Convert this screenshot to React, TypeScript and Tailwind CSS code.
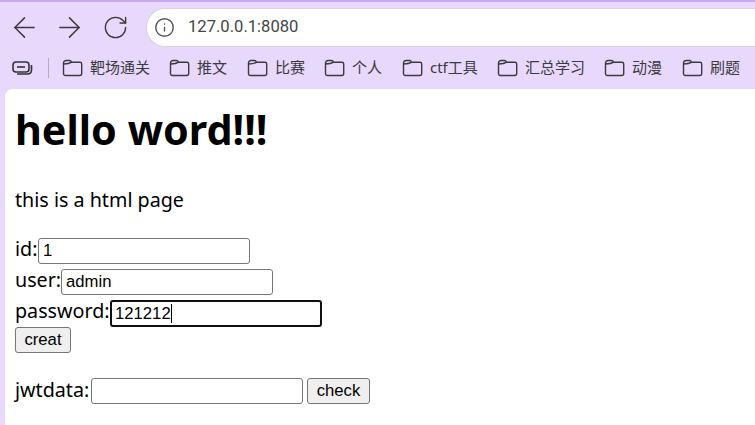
import { ArrowLeft, ArrowRight, Info, RotateCw } from "lucide-react"

const bookmarks = [
  { label: "靶场通关", width: "w-[107px]" },
  { label: "推文", width: "w-[78px]" },
  { label: "比赛", width: "w-[77px]" },
  { label: "个人", width: "w-[78px]" },
  { label: "ctf工具", width: "w-[95px]" },
  { label: "汇总学习", width: "w-[107px]" },
  { label: "动漫", width: "w-[78px]" },
  { label: "刷题", width: "w-[72px]" },
]

function FolderIcon() {
  return (
    <svg width="21" height="18" viewBox="0 0 21 18" fill="none" stroke="#3b3a40" strokeWidth="1.4" className="shrink-0">
      <path d="M1.5 4.2C1.5 2.6 2.6 1.5 4.2 1.5H7.6C8.6 1.5 9 2 9.6 3.2H18C19 3.2 19.7 3.9 19.7 4.9V14.5C19.7 15.7 18.9 16.5 17.7 16.5H3.5C2.3 16.5 1.5 15.7 1.5 14.5V4.2Z" />
      <path d="M1.5 5C3.5 5 7 5 9.6 3.2" />
    </svg>
  )
}

function TextField({ value = "" }: { value?: string }) {
  return (
    <input
      readOnly
      value={value}
      className="h-[26px] w-[212px] rounded-[3px] border border-[#767676] bg-white px-[4px] font-['Liberation_Sans',sans-serif] text-[16.7px] text-black outline-none"
    />
  )
}

export default function App() {
  return (
    <div className="h-[425px] w-[755px] overflow-hidden bg-[#e8d8fb] font-['Noto_Sans','Noto_Sans_CJK_SC',sans-serif]">
      {/* Barre du navigateur */}
      <div className="h-[2px] bg-[#c8a8f4]" />
      <div className="flex h-[44px] items-end pl-[8px]">
        <div className="flex h-[38px] w-full items-center">
          <ArrowLeft size={33} strokeWidth={1.05} className="shrink-0 text-[#3a3a3e]" />
          <ArrowRight size={33} strokeWidth={1.05} className="ml-[12px] shrink-0 text-[#3a3a3e]" />
          <RotateCw size={27} strokeWidth={1.2} className="ml-[16px] shrink-0 text-[#3a3a3e]" />
          <div className="ml-[17px] flex h-[39px] flex-1 items-center rounded-l-[19px] border-y border-l border-[#d8d2dc] bg-white pl-[7px]">
            <Info size={21} strokeWidth={1.6} className="text-[#55555a]" />
            <span className="ml-[13px] font-['Roboto',sans-serif] text-[16.6px] text-[#44444a]">127.0.0.1:8080</span>
          </div>
        </div>
      </div>

      {/* Favoris */}
      <div className="flex h-[43px] items-center pl-[12px]">
        <svg width="21" height="16" viewBox="0 0 21 16" fill="none" stroke="#333338" strokeWidth="1.6" className="shrink-0">
          <rect x="1" y="2" width="16" height="10" rx="3" />
          <path d="M5 7H13" />
          <path d="M19.5 5V10C19.5 12.5 18 14 15.5 14H5" />
        </svg>
        <div className="ml-[15px] mr-[13px] h-[20px] w-px bg-[#b5abc0]" />
        {bookmarks.map((item) => (
          <div key={item.label} className={`flex shrink-0 items-center gap-[7px] ${item.width}`}>
            <FolderIcon />
            <span className="whitespace-nowrap text-[15px] text-[#3b3a40]">{item.label}</span>
          </div>
        ))}
      </div>

      {/* Page */}
      <div className="ml-[5px] h-[336px] rounded-tl-[8px] bg-white pl-[10px] text-[19.7px] text-black">
        <h1 className="pt-[6px] text-[41.3px] font-bold leading-[68px]">hello word!!!</h1>
        <p className="mt-[21px] leading-[32px]">this is a html page</p>

        <div className="mt-[22px] flex h-[31px] items-start leading-[22px]">
          <span className="w-[23px]">id:</span>
          <TextField value="1" />
        </div>
        <div className="flex h-[31px] items-start leading-[22px]">
          <span className="w-[46px]">user:</span>
          <TextField value="admin" />
        </div>
        <div className="flex h-[27px] items-start leading-[22px]">
          <span className="w-[95px]">password:</span>
          <div className="relative">
            <input
              readOnly
              value="121212"
              className="h-[27px] w-[212px] rounded-[3px] border-2 border-[#101010] bg-white px-[3px] font-['Liberation_Sans',sans-serif] text-[16.7px] text-black outline-none"
            />
            <span className="absolute left-[61px] top-[4px] h-[19px] w-px bg-black" />
          </div>
        </div>
        <button className="block h-[26px] w-[56px] rounded-[3px] border border-[#767676] bg-[#efefef] font-['Liberation_Sans',sans-serif] text-[16.7px] leading-none text-black">
          creat
        </button>

        <div className="mt-[25px] flex h-[26px] items-start leading-[24px]">
          <span className="w-[76px]">jwtdata:</span>
          <TextField />
          <button className="ml-[4px] h-[26px] w-[63px] rounded-[3px] border border-[#767676] bg-[#efefef] font-['Liberation_Sans',sans-serif] text-[16.7px] leading-none text-black">
            check
          </button>
        </div>
      </div>
    </div>
  )
}
